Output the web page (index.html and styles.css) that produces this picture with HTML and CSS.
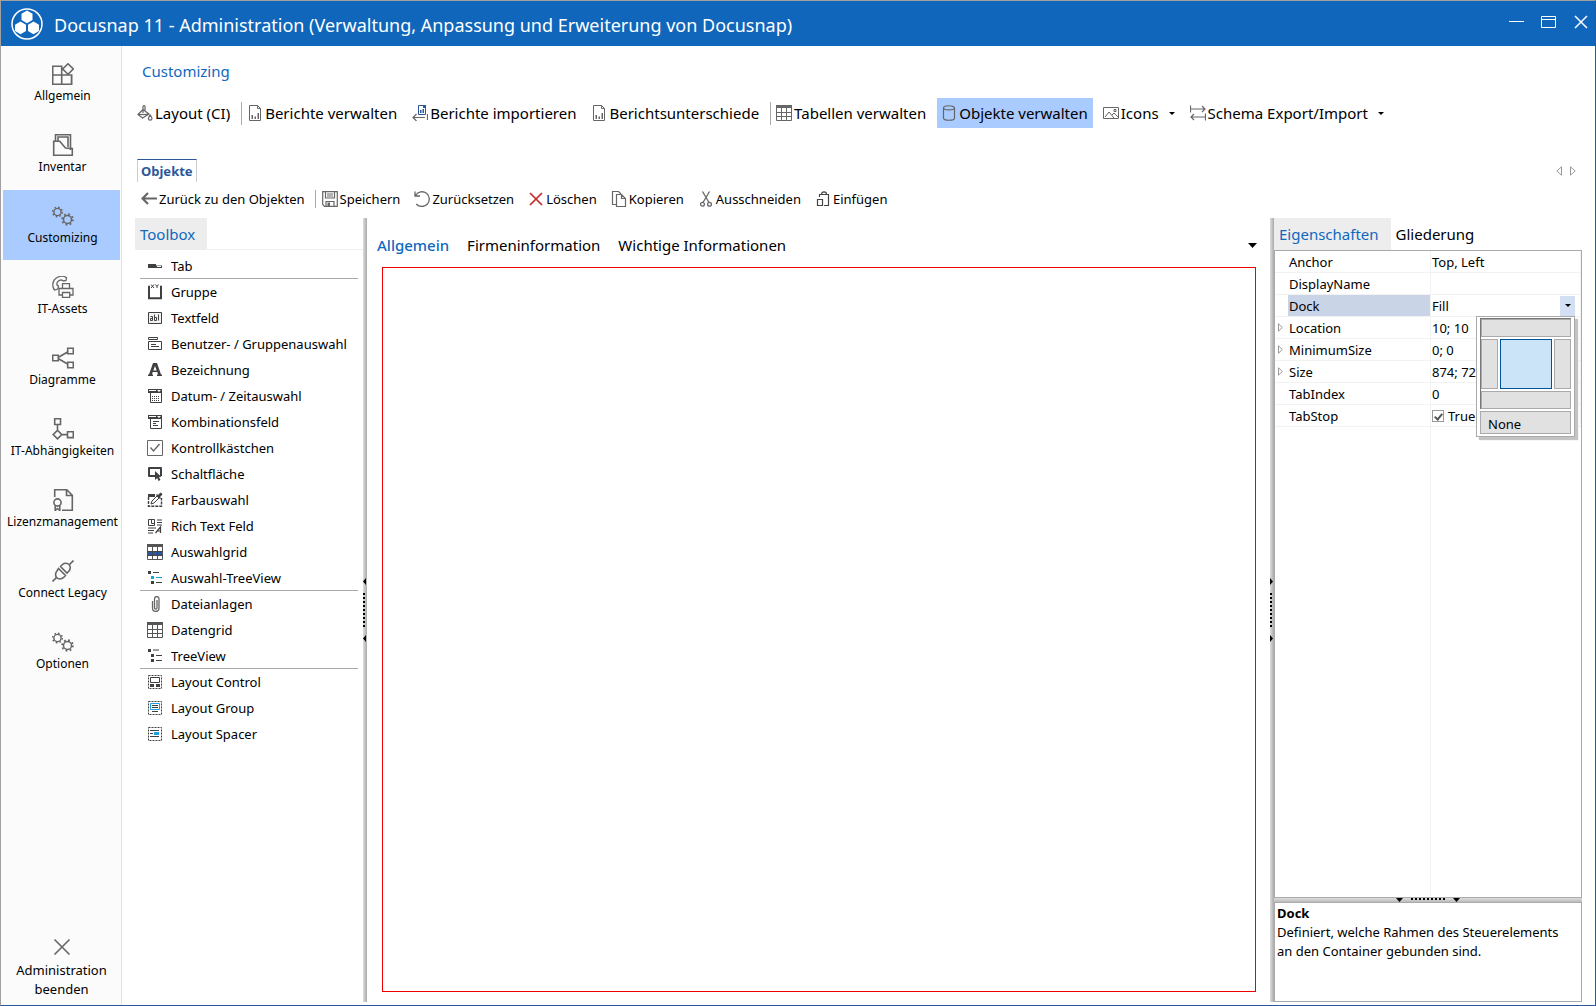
FILE: index.html
```html
<!DOCTYPE html>
<html lang="de">
<head>
<meta charset="utf-8">
<title>Docusnap 11 - Administration</title>
<link rel="stylesheet" href="styles.css">
</head>
<body>
<svg class="sprite" aria-hidden="true">
  <symbol id="gears" viewBox="0 0 22 20">
    <g fill="none" stroke="currentColor">
      <circle cx="5.500" cy="6" r="3.600" stroke-width="1.400"/>
      <circle cx="5.500" cy="6" r="4.800" stroke-width="1.500" stroke-dasharray="1.600 2.170"/>
      <circle cx="15.500" cy="13.500" r="4" stroke-width="1.500"/>
      <circle cx="15.500" cy="13.500" r="5.400" stroke-width="1.700" stroke-dasharray="1.800 2.440"/>
    </g>
  </symbol>
  <symbol id="report" viewBox="0 0 16 16">
    <path d="M2.500.5h8l3 3v12h-11zM10.500.5v3h3" fill="none" stroke="currentColor"/>
    <path d="M4.500 10h1.500v4H4.500zM7.500 11.500H9V14H7.500zM10.500 8H12v6h-1.500z" fill="currentColor"/>
  </symbol>
  <symbol id="grid" viewBox="0 0 16 16">
    <path d="M0 0h16v3H0z" fill="currentColor"/>
    <path d="M.5.5h15v15H.5zM0 7.500h16M0 11.500h16M5.500 3v13M10.500 3v13" fill="none" stroke="currentColor"/>
  </symbol>
  <symbol id="tree" viewBox="0 0 14 14">
    <path d="M0 1h3v3H0zM3 6h3v3H3zM3 11h3v3H3zM5 1.500h6v1H5zM8 7h6v1H8zM8 12h6v1H8z" fill="#404040"/>
  </symbol>
</svg>

<header class="titlebar">
  <svg class="logo" width="32" height="32" viewBox="0 0 32 32" aria-hidden="true">
    <circle cx="16" cy="16" r="15" fill="none" stroke="#fff" stroke-width="1.500"/>
    <g fill="#fff"><path d="M16 2.500l5.500 3.200v6.200L16 15.200l-5.500-3.300V5.700z"/><path d="M9.500 13.500l5.500 3.200v6.200l-5.500 3.300L4 22.900v-6.200z"/><path d="M22.500 13.500l5.500 3.200v6.200l-5.500 3.300-5.500-3.300v-6.200z"/></g>
  </svg>
  <h1>Docusnap 11 - Administration (Verwaltung, Anpassung und Erweiterung von Docusnap)</h1>
  <div class="window-buttons">
    <button type="button" aria-label="Minimieren"><svg width="16" height="16" viewBox="0 0 16 16"><path d="M0 7.500h15" stroke="#fff"/></svg></button>
    <button type="button" aria-label="Maximieren"><svg width="16" height="16" viewBox="0 0 16 16"><path d="M.5 2.500h14v11H.5zM.5 5.500h14" fill="none" stroke="#fff"/></svg></button>
    <button type="button" aria-label="Schließen"><svg width="16" height="16" viewBox="0 0 16 16"><path d="M2 2l12 12M14 2L2 14" stroke="#fff" stroke-width="1.500"/></svg></button>
  </div>
</header>

<div class="shell">
  <nav class="sidebar">
    <button type="button" class="nav-item"><svg width="22" height="22" viewBox="0 0 22 22"><g fill="none" stroke="currentColor" stroke-width="1.600"><path d="M.7 3.200h9v18H.7zM.7 12h19v9.200H9.700M9.700 12v9M19.500 12.500v8.700M16 .8l5.300 5.200L16 11.200 10.700 6z"/></g></svg><span>Allgemein</span></button>
    <button type="button" class="nav-item"><svg width="22" height="22" viewBox="0 0 22 22"><g fill="none" stroke="currentColor" stroke-width="1.600"><path d="M3.500 7V.7h15V16M6 7V3h10v10"/><path d="M1.700 7.200h6L13.500 14l6.800.6v6.700H1.700z"/></g></svg><span>Inventar</span></button>
    <button type="button" class="nav-item active" aria-current="page"><svg width="22" height="22" viewBox="0 0 22 22"><use href="#gears" width="22" height="22"/></svg><span>Customizing</span></button>
    <button type="button" class="nav-item"><svg width="22" height="22" viewBox="0 0 22 22"><g fill="none" stroke="currentColor" stroke-width="1.300"><path d="M2.500 14C-.5 10 .5 4 5 1.500 8 0 12-.2 14.500 1.800L14 4.500l-2.500.5L9.500 4C6 4 4.500 6.500 5 9l1.500 1-.6 3z"/><path d="M10.500 12.500V7.700h7v4.800M10 19H7v-6.500h14V19h-3M10.500 16.500h7.200v5h-7.200z"/></g></svg><span>IT-Assets</span></button>
    <button type="button" class="nav-item"><svg width="22" height="22" viewBox="0 0 22 22"><path d="M.7 8.200h5.600v5.600H.7zM15.700 1.200h5.600v5.600h-5.600zM15.700 15.200h5.600v5.600h-5.600zM7 10l8.500-5M7 12l8.500 5" fill="none" stroke="currentColor" stroke-width="1.600"/></svg><span>Diagramme</span></button>
    <button type="button" class="nav-item"><svg width="22" height="22" viewBox="0 0 22 22"><path d="M2.700.7h5.800v5.800H2.700zM5.500 6.500V12M5.500 12.300l4.300 4.300-4.300 4.300-4.300-4.300zM10 16.600h5.500M15.500 13.800h5.800v5.800h-5.800z" fill="none" stroke="currentColor" stroke-width="1.600"/></svg><span>IT-Abhängigkeiten</span></button>
    <button type="button" class="nav-item"><svg width="22" height="22" viewBox="0 0 22 22"><g fill="none" stroke="currentColor" stroke-width="1.600"><path d="M2.700 8V.7h12l5.600 5.600v15H10M14.500.7v5.800h5.800"/><circle cx="5.500" cy="13.500" r="3.600"/><path d="M3.200 16.500v5l2.300-2 2.300 2v-5"/></g></svg><span>Lizenzmanagement</span></button>
    <button type="button" class="nav-item"><svg width="22" height="22" viewBox="0 0 22 22"><g fill="none" stroke="currentColor" stroke-width="1.600"><path d="M.5 21.500l4-4M17.500 4.500l4-4"/><path d="M6.500 8.500l7 7-2.200 2.200c-2 1.800-5 1.500-6.500 0s-1.800-4.500 0-6.500zM8.500 6.500l2-2c2-1.800 5-1.500 6.500 0s1.800 4.500 0 6.500l-2 2z"/></g></svg><span>Connect Legacy</span></button>
    <button type="button" class="nav-item"><svg width="22" height="22" viewBox="0 0 22 22"><use href="#gears" width="22" height="22"/></svg><span>Optionen</span></button>
    <button type="button" class="nav-exit"><svg width="18" height="18" viewBox="0 0 18 18"><path d="M1.500 1.500l15 15M16.500 1.500l-15 15" stroke="currentColor" stroke-width="1.600"/></svg><span>Administration beenden</span></button>
  </nav>

  <main class="content">
    <h2 class="section-title">Customizing</h2>
    <div class="toolbar ribbon" role="toolbar">
      <button type="button"><svg width="16" height="16" viewBox="0 0 16 16"><g fill="none" stroke="currentColor" stroke-width="1.200"><path d="M6 4.500L1 9.500l4.500 3.500L12 9zM6 8V1.500c0-1.200 2-1.200 2 0V6l3.500 3"/><path d="M13.200 10c1.400 2 1.800 2.700 1.800 3.500 0 2.200-3.600 2.200-3.600 0 0-.8.500-1.500 1.800-3.500z"/><path d="M1 9.500h10.500"/></g></svg>Layout (CI)</button>
      <span class="rule"></span>
      <button type="button"><svg width="16" height="16"><use href="#report"/></svg>Berichte verwalten</button>
      <button type="button"><svg width="16" height="16" viewBox="0 0 16 16"><path d="M6.500.5h5l2 2v7h-7z" fill="none" stroke="#2b579a"/><path d="M8 5h1.500v3H8zM10.500 4H12v4h-1.500zM11 0h3v3h-3z" fill="#2b579a"/><path d="M15.500 9v6M13 12.500H1M4.500 9L1 12.500 4.500 16" fill="none" stroke="currentColor" stroke-width="1.200"/></svg>Berichte importieren</button>
      <button type="button"><svg width="16" height="16"><use href="#report"/></svg>Berichtsunterschiede</button>
      <span class="rule"></span>
      <button type="button"><svg width="16" height="16"><use href="#grid"/></svg>Tabellen verwalten</button>
      <button type="button" class="active" aria-pressed="true"><svg width="16" height="16" viewBox="0 0 16 16"><path d="M2.500 3v10c0 3 11 3 11 0V3c0-3-11-3-11 0zM2.500 3c0 2.500 11 2.500 11 0" fill="none" stroke="currentColor" stroke-width="1.200"/></svg>Objekte verwalten</button>
      <button type="button"><svg width="16" height="16" viewBox="0 0 16 16"><path d="M.5 2.500h15v11H.5zM2 12l4-5 5 6M9 10l2-2 4 4M11 4.500h2v2h-2z" fill="none" stroke="currentColor"/></svg>Icons<i class="caret"></i></button>
      <button type="button"><svg width="16" height="16" viewBox="0 0 16 16"><path d="M.5.500v7M.5 4H15M12 1l3 3-3 3M15.500 8.500v7M15.500 12H1M4 9l-3 3 3 3" fill="none" stroke="currentColor" stroke-width="1.200"/></svg>Schema Export/Import<i class="caret"></i></button>
    </div>

    <div class="doc-tabs">
      <button type="button" class="doc-tab">Objekte</button>
      <div class="tab-scroll">
        <button type="button" aria-label="Zurück blättern"><svg width="6" height="10" viewBox="0 0 6 10"><path d="M5.500.8v8.400L.8 5z" fill="none" stroke="#999"/></svg></button>
        <button type="button" aria-label="Vor blättern"><svg width="6" height="10" viewBox="0 0 6 10"><path d="M.5.800v8.400L5.200 5z" fill="none" stroke="#999"/></svg></button>
      </div>
    </div>

    <div class="toolbar actions" role="toolbar">
      <button type="button"><svg width="16" height="16" viewBox="0 0 16 16"><path d="M16 7.500H2M7 2L1.500 7.500 7 13" fill="none" stroke="currentColor" stroke-width="2.200"/></svg>Zurück zu den Objekten</button>
      <span class="rule"></span>
      <button type="button"><svg width="16" height="16" viewBox="0 0 16 16"><path d="M.7.700h14.600v14.600H2.500L.7 13.500zM3.500 1v6h9V1M4 15v-4.500h8V15M5 3h6M5 5h6" fill="none" stroke="currentColor" stroke-width="1.200"/><path d="M5.500 11.500H8V15H5.500z" fill="currentColor"/></svg>Speichern</button>
      <button type="button"><svg width="16" height="16" viewBox="0 0 16 16"><path d="M1.500 4.500C4 .5 9-.3 12.500 2.200c3.500 2.800 3.700 8 .7 11-3 3-8 3-11-.2M1 .500v4.500h5" fill="none" stroke="currentColor" stroke-width="1.300"/></svg>Zurücksetzen</button>
      <button type="button"><svg width="16" height="16" viewBox="0 0 16 16"><path d="M2 2l12 12M14 2L2 14" stroke="#c62828" stroke-width="1.700"/></svg>Löschen</button>
      <button type="button"><svg width="16" height="16" viewBox="0 0 16 16"><path d="M5 13.500H1.500V.5h6L10 3M5.500 3.500h5l4 4v8h-9zM10.500 3.500v4h4" fill="none" stroke="currentColor" stroke-width="1.200"/></svg>Kopieren</button>
      <button type="button"><svg width="16" height="16" viewBox="0 0 16 16"><g fill="none" stroke="currentColor" stroke-width="1.300"><path d="M4.500.5L11 11.500M11.500.5L5 11.500"/><circle cx="4.500" cy="13.300" r="1.900"/><circle cx="11.500" cy="13.300" r="1.900"/></g></svg>Ausschneiden</button>
      <button type="button"><svg width="16" height="16" viewBox="0 0 16 16"><path d="M4.500 6V3.500h9v11H9M6.500 3.500c0-3.500 5-3.500 5 0M2.500 8.500h5v6h-5z" fill="none" stroke="#444" stroke-width="1.200"/></svg>Einfügen</button>
    </div>

    <div class="workspace">
      <section class="toolbox">
        <div class="panel-tabs"><button type="button" class="active">Toolbox</button></div>
        <ul>
          <li class="group-end"><button type="button"><svg width="16" height="16" viewBox="0 0 16 16"><path d="M1 6h8v1.500h6V10H1z" fill="#404040"/><path d="M10 8.500h4" stroke="#fff"/></svg>Tab</button></li>
          <li><button type="button"><svg width="16" height="16" viewBox="0 0 16 16"><path d="M3 2.800H2v11.400h12V2.800h-1" fill="none" stroke="#404040" stroke-width="2"/><path d="M4 .5l3 3.500M7 .5L4 4M8.500.5l1.500 2 1.500-2M10 2.500V4" stroke="#404040" fill="none"/></svg>Gruppe</button></li>
          <li><button type="button"><svg width="16" height="16" viewBox="0 0 16 16"><path d="M1.500 2.500h13v11h-13z" fill="#f2f2f2" stroke="#404040"/><path d="M3.500 6.500h2v4h-2v-2h2M7.500 4.500v6h2v-3h-2M11.500 4.500v6" fill="none" stroke="#404040"/></svg>Textfeld</button></li>
          <li><button type="button"><svg width="16" height="16" viewBox="0 0 16 16"><path d="M1.500 1.500h9v2h-9zM1.500 5.500h13v8h-13zM4 8.500h5M4 10.500h8" fill="none" stroke="#404040"/></svg>Benutzer- / Gruppenauswahl</button></li>
          <li><button type="button"><svg width="16" height="16" viewBox="0 0 16 16"><path d="M6 1h4l4 11.500h1V14h-5v-1.500h1L10.300 10H5.700L5 12.500h1V14H1v-1.500h1zM8 4L6.300 8.500h3.400z" fill="#404040" fill-rule="evenodd"/></svg>Bezeichnung</button></li>
          <li><button type="button"><svg width="16" height="16" viewBox="0 0 16 16"><path d="M1 1h14v4H1z" fill="#404040"/><path d="M2 2.500h7" stroke="#fff"/><path d="M10 2h4l-2 2z" fill="#fff"/><path d="M3.500 4.500h11v10h-11z" fill="none" stroke="#404040"/><path d="M5 8.500h8M5 10.500h8M5 12.500h8" stroke="#404040" stroke-dasharray="1 1"/></svg>Datum- / Zeitauswahl</button></li>
          <li><button type="button"><svg width="16" height="16" viewBox="0 0 16 16"><path d="M1 1h14v4H1z" fill="#404040"/><path d="M2 2.500h7" stroke="#fff"/><path d="M10 2h4l-2 2z" fill="#fff"/><path d="M3.500 4.500h11v10h-11zM6 7.500h6M6 9.500h3M6 11.500h5" fill="none" stroke="#404040"/></svg>Kombinationsfeld</button></li>
          <li><button type="button"><svg width="16" height="16" viewBox="0 0 16 16"><path d="M.5.500h15v15H.5z" fill="#fff" stroke="#666"/><path d="M3.500 7.500l3 3.500 6-7" fill="none" stroke="#666" stroke-width="1.400"/></svg>Kontrollkästchen</button></li>
          <li><button type="button"><svg width="16" height="16" viewBox="0 0 16 16"><path d="M8 10H2V2h12v8" fill="none" stroke="#404040" stroke-width="2" stroke-linejoin="round"/><path d="M8 5l6.500 6H12l1.500 3-2 1-1.300-3L8 14z" fill="#404040"/></svg>Schaltfläche</button></li>
          <li><button type="button"><svg width="16" height="16" viewBox="0 0 16 16"><path d="M1 2h7v3H1z" fill="#404040"/><path d="M1.500 5v9.200h13V6" fill="none" stroke="#404040" stroke-width="1.400" stroke-dasharray="3 1"/><path d="M4 12l1-3 5-5 2 2-5 5z" fill="#fff" stroke="#404040"/><path d="M9 3l1-1 1 1 2-2c1-1 3 1 2 2l-2 2 1 1-1 1z" fill="#404040"/></svg>Farbauswahl</button></li>
          <li><button type="button"><svg width="16" height="16" viewBox="0 0 16 16"><path d="M1.500 1.500h6v6h-6zM4.500 1.500v4h3M10 2h5M10 4.500h5M10 7h5M1 10h8M1 12.500h6M1 15h5" fill="none" stroke="#404040"/><path d="M8.500 15l5-6v6M10.500 13h3" fill="none" stroke="#404040" stroke-width="1.200"/></svg>Rich Text Feld</button></li>
          <li><button type="button"><svg width="16" height="16" viewBox="0 0 16 16"><use href="#grid"/><path d="M1 8h14v3H1z" fill="#2b579a"/><path d="M0 7.500h16M0 11.500h16M5.500 7v5M10.500 7v5" stroke="#444"/></svg>Auswahlgrid</button></li>
          <li class="group-end"><button type="button"><svg width="16" height="16" viewBox="0 0 16 16"><path d="M1 1h3v3H1zM4 11h3v3H4zM6 2h6v1H6zM9 12h6v1H9z" fill="#404040"/><path d="M4 6h3v3H4zM9 7h6v1H9z" fill="#1ba1e2"/></svg>Auswahl-TreeView</button></li>
          <li><button type="button"><svg width="16" height="16" viewBox="0 0 16 16"><path d="M5.500 5v7c0 4.500 6.500 4.500 6.500 0V3C12-.3 7.500-.3 7.500 3v9c0 1.500 2.500 1.500 2.500 0V4" fill="none" stroke="#666" stroke-width="1.300"/></svg>Dateianlagen</button></li>
          <li><button type="button"><svg width="16" height="16"><use href="#grid"/></svg>Datengrid</button></li>
          <li class="group-end"><button type="button"><svg width="16" height="16" viewBox="0 0 16 16"><use href="#tree" x="1" width="14" height="14"/></svg>TreeView</button></li>
          <li><button type="button"><svg width="16" height="16" viewBox="0 0 16 16"><path d="M1.500 1.500h13v13h-13z" fill="none" stroke="#404040" stroke-dasharray="2 1"/><path d="M3.500 3.500h9v5h-9z" fill="none" stroke="#404040"/><path d="M3 10h4v3H3zM9 10h4v3H9z" fill="#404040"/></svg>Layout Control</button></li>
          <li><button type="button"><svg width="16" height="16" viewBox="0 0 16 16"><path d="M1.500 1.500h13v13h-13z" fill="none" stroke="#404040" stroke-dasharray="2 1"/><path d="M3.500 3.500h9v6h-9z" fill="none" stroke="#1ba1e2"/><path d="M5 5.500h6M5 7.500h6M5 11.500h6" stroke="#404040"/></svg>Layout Group</button></li>
          <li><button type="button"><svg width="16" height="16" viewBox="0 0 16 16"><path d="M1.500 1.500h13v13h-13z" fill="none" stroke="#404040" stroke-dasharray="2 1"/><path d="M3 4.500h9M3 7.500h3M3 10.500h9" stroke="#404040"/><path d="M7 6h5v3H7z" fill="#1ba1e2"/></svg>Layout Spacer</button></li>
        </ul>
      </section>

      <div class="splitter" role="separator" aria-orientation="vertical">
        <svg width="4" height="64" viewBox="0 0 4 64"><path d="M3 0v7L0 3.500zM3 57v7L0 60.500z"/><path d="M1 15v34" stroke="#000" stroke-width="2" stroke-dasharray="2 2"/></svg>
      </div>

      <section class="designer">
        <div class="designer-tabs">
          <button type="button" class="active">Allgemein</button>
          <button type="button">Firmeninformation</button>
          <button type="button">Wichtige Informationen</button>
          <button type="button" class="more" aria-label="Weitere Register"><svg width="9" height="5" viewBox="0 0 9 5"><path d="M0 0h9L4.500 5z"/></svg></button>
        </div>
        <div class="canvas"></div>
      </section>

      <div class="splitter" role="separator" aria-orientation="vertical">
        <svg width="4" height="64" viewBox="0 0 4 64"><path d="M0 0v7l3-3.500zM0 57v7l3-3.500z"/><path d="M1 15v34" stroke="#000" stroke-width="2" stroke-dasharray="2 2"/></svg>
      </div>

      <section class="inspector">
        <div class="panel-tabs"><button type="button" class="active">Eigenschaften</button><button type="button">Gliederung</button></div>
        <div class="property-box">
          <table>
            <tbody>
            <tr><td class="mark"></td><th scope="row">Anchor</th><td>Top, Left</td></tr>
            <tr><td class="mark"></td><th scope="row">DisplayName</th><td></td></tr>
            <tr class="selected"><td class="mark"></td><th scope="row">Dock</th><td>
              <div class="dock-value">Fill<button type="button" aria-label="Dock auswählen" aria-expanded="true"><i class="caret"></i></button>
                <div class="dock-picker">
                  <div class="dock-sides">
                    <button type="button" class="edge" aria-label="Top"></button>
                    <button type="button" aria-label="Left"></button>
                    <button type="button" class="fill" aria-label="Fill"></button>
                    <button type="button" aria-label="Right"></button>
                    <button type="button" class="edge" aria-label="Bottom"></button>
                  </div>
                  <button type="button" class="none">None</button>
                </div>
              </div></td></tr>
            <tr><td class="mark"><svg width="5" height="9" viewBox="0 0 5 9"><path d="M.5.800v7.400L4.300 4.500z" fill="none" stroke="#999"/></svg></td><th scope="row">Location</th><td>10; 10</td></tr>
            <tr><td class="mark"><svg width="5" height="9" viewBox="0 0 5 9"><path d="M.5.800v7.400L4.300 4.500z" fill="none" stroke="#999"/></svg></td><th scope="row">MinimumSize</th><td>0; 0</td></tr>
            <tr><td class="mark"><svg width="5" height="9" viewBox="0 0 5 9"><path d="M.5.800v7.400L4.300 4.500z" fill="none" stroke="#999"/></svg></td><th scope="row">Size</th><td>874; 72</td></tr>
            <tr><td class="mark"></td><th scope="row">TabIndex</th><td>0</td></tr>
            <tr><td class="mark"></td><th scope="row">TabStop</th><td><label class="check"><input type="checkbox" checked>True</label></td></tr>
            </tbody>
          </table>
          <div class="property-rest"></div>
        </div>
        <div class="hsplitter" role="separator"><svg width="64" height="4" viewBox="0 0 64 4"><path d="M0 0h7L3.500 4zM57 0h7l-3.500 4z"/><path d="M15 1h34" stroke="#000" stroke-width="2" stroke-dasharray="2 2"/></svg></div>
        <div class="help"><strong>Dock</strong><p>Definiert, welche Rahmen des Steuerelements an den Container gebunden sind.</p></div>
      </section>
    </div>
  </main>
</div>
</body>
</html>
```
FILE: styles.css
```css
* { box-sizing: border-box; }

body {
  margin: 0;
  height: 100vh;
  display: flex;
  flex-direction: column;
  border: 1px solid #2b579a;
  border-top-color: #a0a0a0;
  border-left-color: #a0a0a0;
  background: #fff;
  color: #000;
  font: 13px/18px "Noto Sans", "Open Sans", sans-serif;
}

button {
  margin: 0;
  padding: 0;
  border: 0;
  background: none;
  color: inherit;
  font: inherit;
  white-space: nowrap;
}

h1, h2, p, ul { margin: 0; padding: 0; font-weight: 400; }
ul { list-style: none; }
svg { display: block; flex: none; }
.sprite { position: absolute; width: 0; height: 0; }

/* Title bar */
.titlebar {
  flex: none;
  height: 45px;
  display: flex;
  align-items: center;
  padding: 0 6px 0 10px;
  background: #0f66ba;
  color: #fff;
}
.titlebar h1 { flex: 1; margin-left: 11px; padding-top: 3px; font-size: 18px; line-height: 24px; }
.window-buttons { display: flex; gap: 16px; padding-bottom: 3px; }

.shell { flex: 1; min-height: 0; display: flex; }

/* Navigation */
.sidebar {
  flex: none;
  width: 121px;
  display: flex;
  flex-direction: column;
  gap: 1px;
  padding: 2px 1px 6px 2px;
  background: #fbfbfb;
  border-right: 1px solid #e3e3e3;
}
.nav-item {
  height: 70px;
  display: flex;
  flex-direction: column;
  align-items: center;
  justify-content: center;
  gap: 2px;
  padding: 2px 0 0 2px;
  font-size: 12px;
}
.nav-item svg, .nav-exit svg { color: #666; }
.nav-item.active { background: #a9cbff; }
.nav-exit {
  margin-top: auto;
  display: flex;
  flex-direction: column;
  align-items: center;
  gap: 5px;
  line-height: 19px;
  white-space: normal;
}

/* Content header */
.content { flex: 1; min-width: 0; display: flex; flex-direction: column; padding: 0 13px 3px; }
.section-title { margin-top: 14px; padding-left: 7px; color: #1068bf; font-size: 15px; line-height: 22px; }

.toolbar { display: flex; align-items: center; }
.toolbar button { display: flex; align-items: center; gap: 2px; }
.toolbar svg { color: #666; }
.rule { width: 1px; background: #aaa; }
.caret { width: 0; border: 3px solid transparent; border-top-color: #000; border-bottom: 0; }

.ribbon { margin-top: 16px; gap: 6px; font-size: 15px; }
.ribbon button { height: 30px; padding: 0 5px 0 4px; }
.ribbon .rule { height: 23px; margin-right: -5px; }
.ribbon > button:first-child { padding-left: 2px; }
.ribbon .caret { margin-left: 8px; }
.ribbon .active { background: #a9cbff; }

.doc-tabs { display: flex; justify-content: space-between; align-items: center; margin-top: 31px; padding: 0 6px 0 2px; }
.doc-tab { padding: 2px 3px; border: 1px solid #ccc; border-top-color: #2b579a; border-bottom: 0; color: #2b579a; font-weight: 700; font-size: 13px; }
.tab-scroll { display: flex; gap: 8px; }

.actions { height: 36px; padding: 0 0 2px 6px; gap: 14px; }
.actions .rule { height: 18px; margin: 0 -8px 0 -4px; }

/* Workspace */
.workspace { flex: 1; min-height: 0; display: flex; }
.panel-tabs { display: flex; height: 32px; }
.panel-tabs button { padding: 0 12px 0 5px; font-size: 15px; }
.panel-tabs .active { background: #ededed; color: #1068bf; }

.toolbox { flex: none; width: 228px; }
.toolbox .panel-tabs { border-bottom: 1px solid #eee; }
.toolbox ul { padding: 3px 5px; }
.toolbox li { height: 26px; border-bottom: 1px solid transparent; }
.toolbox li.group-end { border-color: #aaa; }
.toolbox li button { width: 100%; height: 25px; display: flex; align-items: center; gap: 8px; padding-left: 7px; color: #000; }
.toolbox li svg { color: #555; }

.splitter {
  flex: none;
  width: 4px;
  display: flex;
  align-items: center;
  background: linear-gradient(90deg, #ddd, #aaa);
}

.designer { flex: 1; min-width: 0; display: flex; flex-direction: column; padding: 12px 14px 10px 15px; }
.designer-tabs { display: flex; align-items: center; gap: 18px; margin: 0 -1px 7px -5px; font-size: 15px; line-height: 30px; }
.designer-tabs .active { color: #1068bf; font-weight: 500; }
.designer-tabs .more { margin-left: auto; }
.canvas { flex: 1; border: 1px solid #e00; }

.inspector { flex: none; width: 308px; display: flex; flex-direction: column; }
.property-box { flex: 1; min-height: 0; display: flex; flex-direction: column; border: 1px solid #aaa; }
table { width: 100%; border-collapse: separate; border-spacing: 0; table-layout: fixed; }
th, td { height: 22px; padding: 0 0 0 1px; border-bottom: 1px solid #f2f2f2; border-right: 1px solid #f2f2f2; text-align: left; font-weight: 400; line-height: 18px; }
th { width: 143px; }
.mark { width: 13px; padding-left: 3px; border-right: 0; }
.property-rest { flex: 1; width: 156px; border-right: 1px solid #f2f2f2; }
.selected th { background: #c9d5e6; }
.dock-value { position: relative; display: flex; align-items: center; justify-content: space-between; padding-right: 5px; }
.dock-value > button { width: 15px; height: 20px; display: flex; align-items: center; justify-content: center; background: #d3dff3; }
.check { display: flex; align-items: center; gap: 4px; }
.check input { appearance: none; width: 12px; height: 12px; margin: 0; border: 1px solid #999; background: #fff; display: grid; place-items: center; }
.check input:checked::before { content: ""; width: 3px; height: 6px; border: solid #555; border-width: 0 2px 2px 0; transform: rotate(40deg); }

.dock-picker {
  position: absolute;
  z-index: 1;
  top: 20px;
  right: 5px;
  width: 99px;
  display: flex;
  flex-direction: column;
  gap: 2px;
  padding: 1px 3px 2px;
  border: 1px solid #aaa;
  background: #fff;
  box-shadow: 3px 3px 1px #c4c4c4;
}
.dock-sides { display: grid; grid-template-columns: 17px 1fr 17px; grid-template-rows: 18px 50px 18px; gap: 2px; border: 1px solid #777; border-right: 0; border-bottom: 0; }
.dock-picker button { border: 1px solid #aaa; background: #e1e1e1; }
.dock-picker .edge { grid-column: 1 / -1; }
.dock-picker .fill { border-color: #00529b; background: #cce4f7; }
.dock-picker .none { height: 23px; padding: 3px 7px 0; text-align: left; }

.hsplitter { height: 4px; display: flex; justify-content: center; background: linear-gradient(#ddd, #bbb); }
.help { height: 100px; padding: 1px 16px 0 2px; border: 1px solid #aaa; line-height: 19px; }
```
